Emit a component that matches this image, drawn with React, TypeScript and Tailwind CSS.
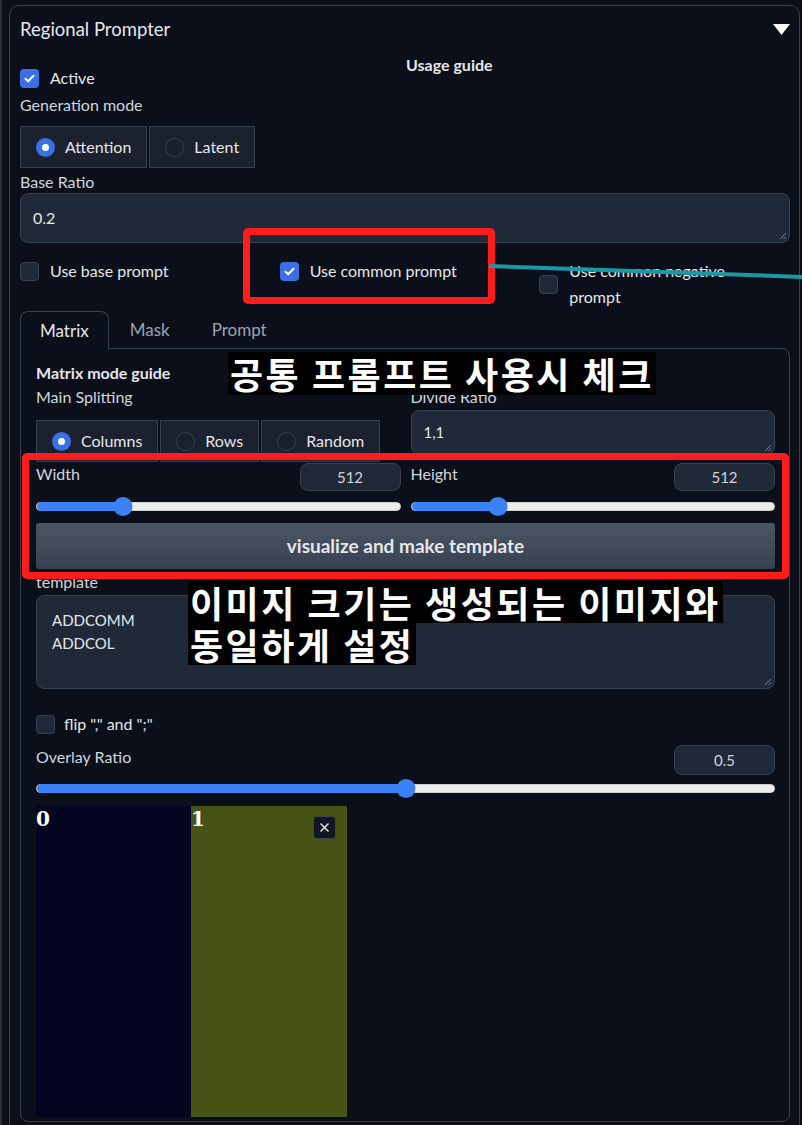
import React from "react";

const Checkbox = ({ checked = false }: { checked?: boolean }) =>
  checked ? (
    <span className="flex h-[19px] w-[19px] shrink-0 items-center justify-center rounded-[4px] bg-[#3b6fe6]">
      <svg width="13" height="13" viewBox="0 0 13 13">
        <path d="M2.5 6.8 L5.2 9.3 L10.5 3.8" fill="none" stroke="white" strokeWidth="2" strokeLinecap="round" strokeLinejoin="round" />
      </svg>
    </span>
  ) : (
    <span className="h-[19px] w-[19px] shrink-0 rounded-[4px] border border-[#384150] bg-[#1f2937]" />
  );

const Radio = ({ checked = false }: { checked?: boolean }) =>
  checked ? (
    <span className="flex h-[19px] w-[19px] shrink-0 items-center justify-center rounded-full bg-[#3b6fe6]">
      <span className="h-[7px] w-[7px] rounded-full bg-white" />
    </span>
  ) : (
    <span className="h-[19px] w-[19px] shrink-0 rounded-full border border-[#384150] bg-[#1a202c]" />
  );

const RadioGroup = ({ options, selected }: { options: string[]; selected: string }) => (
  <div className="flex gap-[2px]">
    {options.map((o) => (
      <div
        key={o}
        className="flex h-[42px] items-center gap-[10px] border border-[#384150] bg-[#1b212d] pl-[15px] pr-[15px] text-[16px] text-[#e5e7eb]"
      >
        <Radio checked={o === selected} />
        <span>{o}</span>
      </div>
    ))}
  </div>
);

const ResizeHandle = () => (
  <svg className="absolute bottom-[2px] right-[2px]" width="9" height="9" viewBox="0 0 9 9">
    <path d="M8 2 L2 8 M8 5.5 L5.5 8" stroke="#7b8494" strokeWidth="1" />
  </svg>
);

const NumberBox = ({ value, tall = false }: { value: string; tall?: boolean }) => (
  <div
    className={`flex w-[101px] items-center justify-center rounded-lg border border-[#384150] bg-[#1f2937] text-[15px] text-[#d1d5db] ${
      tall ? "h-[30px]" : "h-[28px]"
    }`}
  >
    {value}
  </div>
);

const Slider = ({ pct, h = "h-[30px]" }: { pct: number; h?: string }) => (
  <div className={`relative flex items-center ${h}`}>
    <div className="relative h-[9px] w-full rounded-full border border-[#cfcfcf] bg-[#ececec]">
      <div className="absolute left-0 top-[-1px] h-[9px] rounded-full bg-[#3b82f6]" style={{ width: `${pct}%` }} />
    </div>
    <div
      className="absolute h-[19px] w-[19px] -translate-x-1/2 rounded-full bg-[#3b82f6]"
      style={{ left: `${pct}%` }}
    />
  </div>
);

const Label = ({ children }: { children: React.ReactNode }) => (
  <div className="h-[20px] text-[16px] leading-[20px] text-[#d1d5db]">{children}</div>
);

export default function App() {
  return (
    <div className="relative h-[1125px] w-[802px] overflow-hidden border-l-2 border-[#2a303b] bg-[#0b0f19] font-['Lato','Noto_Sans',sans-serif] text-[#d1d5db]">
      {/* accordion panel */}
      <div className="ml-[7px] mt-[5px] h-[1200px] w-[791px] rounded-[10px] border border-[#374151] pl-[10px] pr-[9px]">
        <div className="mt-[12px] flex h-[24px] items-center justify-between">
          <span className="text-[18.5px] text-[#e5e7eb]">Regional Prompter</span>
          <svg width="17" height="12" viewBox="0 0 17 12">
            <polygon points="0,0 17,0 8.5,11" fill="white" />
          </svg>
        </div>

        <div className="mt-[13px] flex">
          <div className="w-[375px] pt-[12px]">
            <div className="flex h-[22px] items-center gap-[11px]">
              <Checkbox checked />
              <span className="text-[16px] text-[#e5e7eb]">Active</span>
            </div>
            <div className="mt-[6px]">
              <Label>Generation mode</Label>
            </div>
            <div className="mt-[11px]">
              <RadioGroup options={["Attention", "Latent"]} selected="Attention" />
            </div>
          </div>
          <div className="ml-[11px] flex-1">
            <div className="text-[16px] font-bold leading-[20px] text-[#e5e7eb]">Usage guide</div>
          </div>
        </div>

        <div className="mt-[4px]">
          <Label>Base Ratio</Label>
        </div>
        <div className="relative mt-[1px] flex h-[50px] items-center rounded-lg border border-[#374151] bg-[#1f2937] px-[12px] text-[16px] text-[#e5e7eb]">
          0.2
          <ResizeHandle />
        </div>

        <div className="mt-[15px] grid grid-cols-3 items-start gap-x-[9px] text-[16px] text-[#e5e7eb]">
          <div className="flex h-[26px] items-center gap-[11px]">
            <Checkbox />
            <span>Use base prompt</span>
          </div>
          <div className="flex h-[26px] items-center gap-[11px]">
            <Checkbox checked />
            <span>Use common prompt</span>
          </div>
          <div className="flex items-center gap-[11px]">
            <Checkbox />
            <span className="max-w-[175px] leading-[26px]">Use common negative prompt</span>
          </div>
        </div>

        {/* tabs */}
        <div className="mt-[1px] flex h-[37px] text-[17px]">
          <div className="relative z-10 flex h-[38px] items-center rounded-t-lg border border-b-0 border-[#374151] bg-[#0b0f19] px-[19px] text-[#e5e7eb]">
            Matrix
          </div>
          <div className="flex items-center px-[21px] text-[#9ca3af]">Mask</div>
          <div className="flex items-center px-[21px] text-[#9ca3af]">Prompt</div>
        </div>
        <div className="rounded-b-lg rounded-tr-lg border border-[#374151] pb-[4px] pl-[15px] pr-[14px] pt-[14px]">
          <div className="text-[16px] font-bold leading-[20px] text-[#e5e7eb]">Matrix mode guide</div>

          <div className="mt-[4px] grid grid-cols-2 gap-x-[10px]">
            <div>
              <Label>Main Splitting</Label>
              <div className="mt-[13px]">
                <RadioGroup options={["Columns", "Rows", "Random"]} selected="Columns" />
              </div>
            </div>
            <div>
              <Label>Divide Ratio</Label>
              <div className="relative mt-[3px] flex h-[45px] items-center rounded-lg border border-[#374151] bg-[#1f2937] px-[12px] text-[15px] text-[#e5e7eb]">
                1,1
                <ResizeHandle />
              </div>
            </div>
          </div>

          <div className="mt-[1px] grid grid-cols-2 gap-x-[10px]">
            <div>
              <div className="flex h-[28px] items-start justify-between">
                <span className="text-[16px] leading-[22px]">Width</span>
                <NumberBox value="512" />
              </div>
              <Slider pct={24} />
            </div>
            <div>
              <div className="flex h-[28px] items-start justify-between">
                <span className="text-[16px] leading-[22px]">Height</span>
                <NumberBox value="512" />
              </div>
              <Slider pct={24} />
            </div>
          </div>

          <button className="mt-[2px] flex h-[46px] w-full items-center justify-center rounded-[3px] bg-gradient-to-b from-[#4b5563] to-[#374151] text-[19px] font-bold text-[#e5e7eb]">
            visualize and make template
          </button>

          <div className="mt-[3px]">
            <Label>template</Label>
          </div>
          <div className="relative mt-[3px] h-[94px] rounded-lg border border-[#374151] bg-[#1f2937] pl-[15px] pt-[13px] text-[15px] leading-[23px] text-[#e5e7eb]">
            <div>ADDCOMM</div>
            <div>ADDCOL</div>
            <ResizeHandle />
          </div>

          <div className="mt-[25px] flex h-[20px] items-center gap-[9px] text-[16px] text-[#e5e7eb]">
            <Checkbox />
            <span>flip "," and ";"</span>
          </div>

          <div className="mt-[11px] flex h-[30px] items-start justify-between">
            <span className="text-[16px] leading-[24px]">Overlay Ratio</span>
            <NumberBox value="0.5" tall />
          </div>
          <Slider pct={50} h="h-[26px]" />

          <div className="relative mt-[5px] flex h-[311px] w-[311px]">
            <div className="h-full w-[155px] bg-[#050521]">
              <span className="font-['DejaVu_Serif',serif] text-[20px] font-bold leading-[26px] text-white">0</span>
            </div>
            <div className="h-full flex-1 bg-[#495215]">
              <span className="font-['DejaVu_Serif',serif] text-[20px] font-bold leading-[26px] text-white">1</span>
            </div>
            <div className="absolute right-[11px] top-[10px] flex h-[23px] w-[23px] items-center justify-center rounded-[4px] border border-[#374151] bg-[#111622]">
              <svg width="11" height="11" viewBox="0 0 11 11">
                <path d="M1.5 1.5 L9.5 9.5 M9.5 1.5 L1.5 9.5" stroke="#e5e7eb" strokeWidth="1.4" />
              </svg>
            </div>
          </div>
        </div>
      </div>

      {/* annotations */}
      <div className="absolute left-[241px] top-[228px] h-[76px] w-[252px] rounded-[5px] border-[7px] border-[#ff1c1c]" />
      <div className="absolute left-[20px] top-[453px] h-[126px] w-[767px] rounded-[5px] border-[7px] border-[#ff1c1c]" />
      <svg className="absolute left-0 top-0" width="802" height="1125">
        <line x1="487" y1="266" x2="802" y2="277" stroke="#1b98a6" strokeWidth="4" />
      </svg>
      <div className="absolute left-[226px] top-[352px] bg-black px-[2px] font-['Noto_Sans_CJK_KR',sans-serif] text-[36px] font-bold leading-[43px] tracking-[2.5px] text-white">
        공통 프롬프트 사용시 체크
      </div>
      <div className="absolute left-[186px] top-[581px] font-['Noto_Sans_CJK_KR',sans-serif] text-[36px] font-bold leading-[42px] tracking-[2.5px] text-white">
        <div className="w-fit bg-black px-[2px]">이미지 크기는 생성되는 이미지와</div>
        <div className="w-fit bg-black px-[2px]">동일하게 설정</div>
      </div>
    </div>
  );
}
